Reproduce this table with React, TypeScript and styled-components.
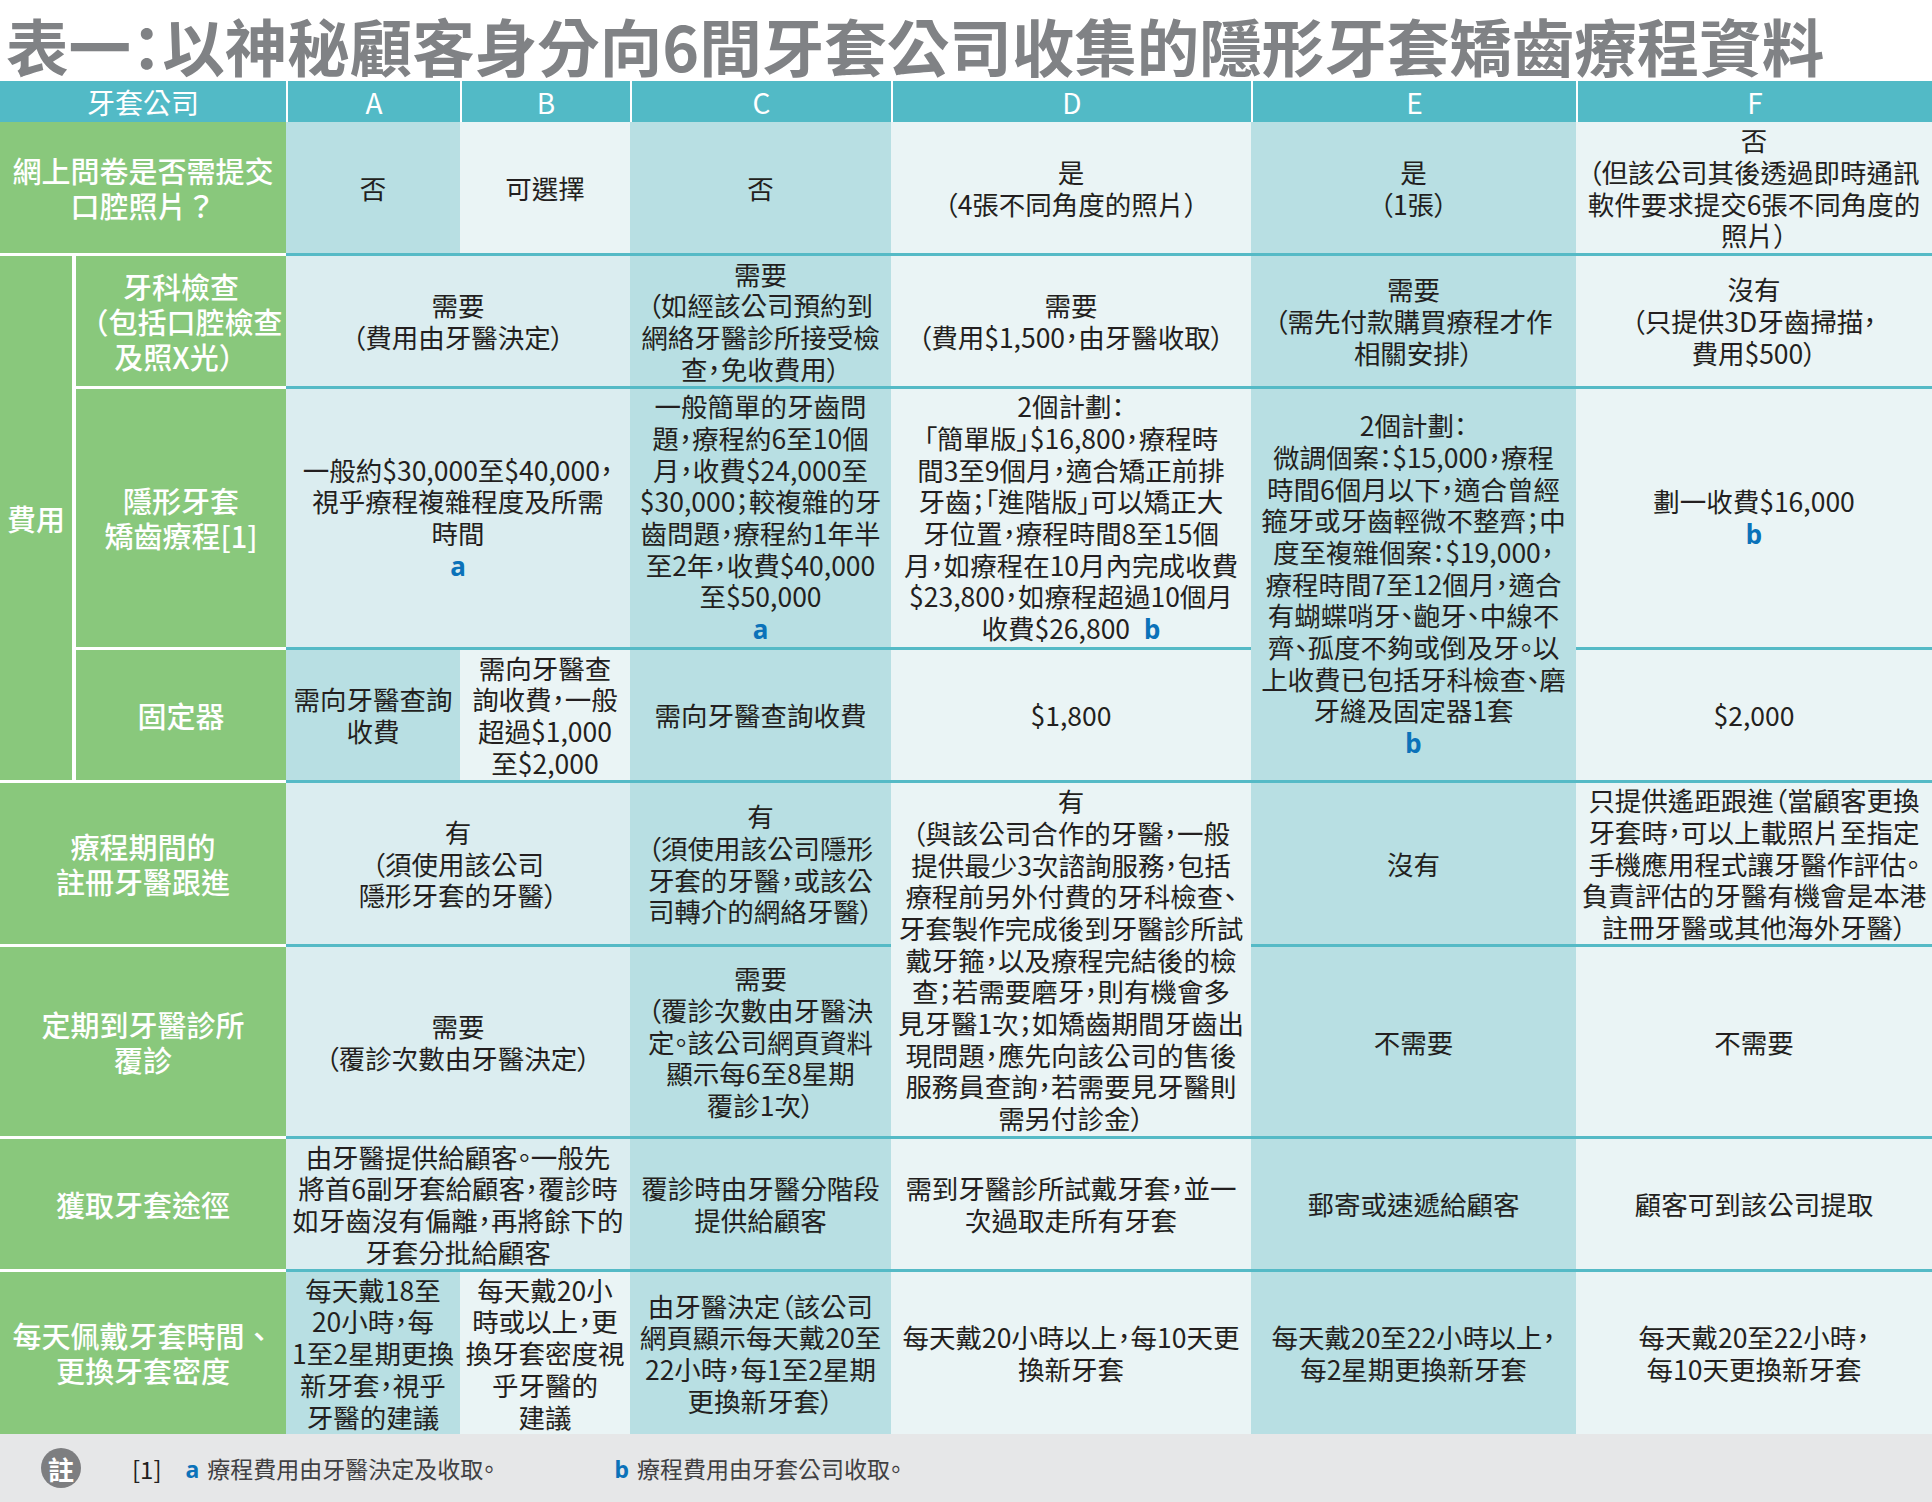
import React from 'react';
import styled, { createGlobalStyle } from 'styled-components';

const C = {
  green: '#89c87c',
  head: '#52bac6',
  dark: '#b8dfe3',
  light: '#eaf4f5',
  mid: '#dbedf0',
  line: '#55bac6',
  text: '#231f20',
  blue: '#0b72b9',
  title: '#808285',
  foot: '#e6e7e8',
};

type Tone = 'dark' | 'light' | 'mid';
const tones: Record<Tone, string> = { dark: C.dark, light: C.light, mid: C.mid };

const GlobalStyle = createGlobalStyle`
  html, body { margin: 0; padding: 0; background: #fff; }
  body {
    font-family: "Noto Sans CJK TC", "Noto Sans", sans-serif;
    color: ${C.text};
  }
`;

const Page = styled.div`
  width: 1932px;
  height: 1502px;
  display: flex;
  flex-direction: column;
  overflow: hidden;
`;

const Title = styled.h1`
  margin: 0;
  height: 81px;
  box-sizing: border-box;
  padding: 9px 0 0 6px;
  font-size: 62.5px;
  line-height: 72px;
  font-weight: 700;
  color: ${C.title};
  white-space: nowrap;
  font-feature-settings: "palt";
`;

const Grid = styled.div`
  display: grid;
  grid-template-columns: 72px 214px 174px 170px 261px 360px 325px 356px;
  grid-template-rows: 41px 131px 133px 261px 133px 164px 192px 133px 165px;
`;

type Place = { $c: string; $r: string };

const Head = styled.div<Place & { $first?: boolean }>`
  grid-column: ${p => p.$c};
  grid-row: ${p => p.$r};
  background: ${C.head};
  border-left: ${p => (p.$first ? 'none' : '2px solid #fff')};
  box-sizing: border-box;
  display: flex;
  align-items: center;
  justify-content: center;
  color: #fff;
  font-size: 28px;
  line-height: 1;
  white-space: nowrap;
`;

const Label = styled.div<Place & { $sep?: boolean; $sub?: boolean }>`
  grid-column: ${p => p.$c};
  grid-row: ${p => p.$r};
  background: ${C.green};
  border-top: ${p => (p.$sep ? '3px solid #fff' : 'none')};
  border-left: ${p => (p.$sub ? '4px solid #fff' : 'none')};
  box-sizing: border-box;
  display: flex;
  align-items: center;
  justify-content: center;
  text-align: center;
  white-space: nowrap;
  color: #fff;
  font-size: 29px;
  line-height: 35px;
  font-weight: 500;
`;

const Cell = styled.div<Place & { $tone: Tone; $sep?: boolean }>`
  grid-column: ${p => p.$c};
  grid-row: ${p => p.$r};
  background: ${p => tones[p.$tone]};
  border-top: ${p => (p.$sep ? `3px solid ${C.line}` : 'none')};
  box-sizing: border-box;
  display: flex;
  align-items: center;
  justify-content: center;
  text-align: center;
  white-space: nowrap;
  color: ${C.text};
  font-size: 26.5px;
  line-height: 31.7px;
  font-feature-settings: "palt";
`;

const Text = styled.div`
  display: block;
`;

const Mark = styled.span<{ $inline?: boolean }>`
  font-family: "Noto Sans", "Open Sans", sans-serif;
  font-weight: 700;
  color: ${C.blue};
  font-size: 26px;
  margin-left: ${p => (p.$inline ? '14px' : '0')};
`;

const Footer = styled.footer`
  flex: 1;
  background: ${C.foot};
  display: flex;
  align-items: center;
  padding-left: 41px;
`;

const Badge = styled.span`
  width: 40px;
  height: 40px;
  border-radius: 50%;
  background: #7d7e80;
  color: #fff;
  font-size: 26px;
  font-weight: 700;
  display: flex;
  align-items: center;
  justify-content: center;
`;

const NoteRef = styled.span`
  margin-left: 51px;
  font-size: 24px;
  color: ${C.text};
`;

const NoteItem = styled.span<{ $w?: number; $ml: number }>`
  margin-left: ${p => p.$ml}px;
  width: ${p => (p.$w ? `${p.$w}px` : 'auto')};
  display: inline-flex;
  align-items: baseline;
  gap: 8px;
  font-size: 23px;
  color: #414042;
  font-feature-settings: "palt";
`;

const NoteMark = styled.span`
  font-family: "Noto Sans", "Open Sans", sans-serif;
  font-weight: 700;
  color: ${C.blue};
  font-size: 23px;
`;

const L = ({ lines }: { lines: React.ReactNode[] }) => (
  <Text>
    {lines.map((l, i) => (
      <React.Fragment key={i}>
        {i > 0 && <br />}
        {l}
      </React.Fragment>
    ))}
  </Text>
);

const AB = '3 / 5';
const A = '3';
const B = '4';
const CC = '5';
const D = '6';
const E = '7';
const F = '8';

export default function App() {
  return (
    <>
      <GlobalStyle />
      <Page>
        <Title>表一：以神秘顧客身分向6間牙套公司收集的隱形牙套矯齒療程資料</Title>
        <Grid>
          {/* header */}
          <Head $c="1 / 3" $r="1" $first>牙套公司</Head>
          <Head $c={A} $r="1">A</Head>
          <Head $c={B} $r="1">B</Head>
          <Head $c={CC} $r="1">C</Head>
          <Head $c={D} $r="1">D</Head>
          <Head $c={E} $r="1">E</Head>
          <Head $c={F} $r="1">F</Head>

          {/* row 1 */}
          <Label $c="1 / 3" $r="2"><L lines={['網上問卷是否需提交', '口腔照片？']} /></Label>
          <Cell $c={A} $r="2" $tone="dark"><L lines={['否']} /></Cell>
          <Cell $c={B} $r="2" $tone="light"><L lines={['可選擇']} /></Cell>
          <Cell $c={CC} $r="2" $tone="dark"><L lines={['否']} /></Cell>
          <Cell $c={D} $r="2" $tone="light"><L lines={['是', '（4張不同角度的照片）']} /></Cell>
          <Cell $c={E} $r="2" $tone="dark"><L lines={['是', '（1張）']} /></Cell>
          <Cell $c={F} $r="2" $tone="light">
            <L lines={['否', '（但該公司其後透過即時通訊', '軟件要求提交6張不同角度的', '照片）']} />
          </Cell>

          {/* 費用 group */}
          <Label $c="1" $r="3 / 6" $sep><L lines={['費用']} /></Label>

          {/* row 2 */}
          <Label $c="2" $r="3" $sep $sub><L lines={['牙科檢查', '（包括口腔檢查', '及照X光）']} /></Label>
          <Cell $c={AB} $r="3" $tone="mid" $sep><L lines={['需要', '（費用由牙醫決定）']} /></Cell>
          <Cell $c={CC} $r="3" $tone="dark" $sep>
            <L lines={['需要', '（如經該公司預約到', '網絡牙醫診所接受檢', '查，免收費用）']} />
          </Cell>
          <Cell $c={D} $r="3" $tone="light" $sep><L lines={['需要', '（費用$1,500，由牙醫收取）']} /></Cell>
          <Cell $c={E} $r="3" $tone="dark" $sep>
            <L lines={['需要', '（需先付款購買療程才作', '相關安排）']} />
          </Cell>
          <Cell $c={F} $r="3" $tone="light" $sep>
            <L lines={['沒有', '（只提供3D牙齒掃描，', '費用$500）']} />
          </Cell>

          {/* row 3 */}
          <Label $c="2" $r="4" $sep $sub><L lines={['隱形牙套', '矯齒療程[1]']} /></Label>
          <Cell $c={AB} $r="4" $tone="mid" $sep>
            <L lines={['一般約$30,000至$40,000，', '視乎療程複雜程度及所需', '時間', <Mark>a</Mark>]} />
          </Cell>
          <Cell $c={CC} $r="4" $tone="dark" $sep>
            <L
              lines={[
                '一般簡單的牙齒問',
                '題，療程約6至10個',
                '月，收費$24,000至',
                '$30,000；較複雜的牙',
                '齒問題，療程約1年半',
                '至2年，收費$40,000',
                '至$50,000',
                <Mark>a</Mark>,
              ]}
            />
          </Cell>
          <Cell $c={D} $r="4" $tone="light" $sep>
            <L
              lines={[
                '2個計劃：',
                '「簡單版」$16,800，療程時',
                '間3至9個月，適合矯正前排',
                '牙齒；「進階版」可以矯正大',
                '牙位置，療程時間8至15個',
                '月，如療程在10月內完成收費',
                '$23,800，如療程超過10個月',
                <>收費$26,800<Mark $inline>b</Mark></>,
              ]}
            />
          </Cell>
          <Cell $c={E} $r="4 / 6" $tone="dark" $sep>
            <L
              lines={[
                '2個計劃：',
                '微調個案：$15,000，療程',
                '時間6個月以下，適合曾經',
                '箍牙或牙齒輕微不整齊；中',
                '度至複雜個案：$19,000，',
                '療程時間7至12個月，適合',
                '有蝴蝶哨牙、齙牙、中線不',
                '齊、孤度不夠或倒及牙。以',
                '上收費已包括牙科檢查、磨',
                '牙縫及固定器1套',
                <Mark>b</Mark>,
              ]}
            />
          </Cell>
          <Cell $c={F} $r="4" $tone="light" $sep>
            <L lines={['劃一收費$16,000', <Mark>b</Mark>]} />
          </Cell>

          {/* row 4 */}
          <Label $c="2" $r="5" $sep $sub><L lines={['固定器']} /></Label>
          <Cell $c={A} $r="5" $tone="dark" $sep><L lines={['需向牙醫查詢', '收費']} /></Cell>
          <Cell $c={B} $r="5" $tone="light" $sep>
            <L lines={['需向牙醫查', '詢收費，一般', '超過$1,000', '至$2,000']} />
          </Cell>
          <Cell $c={CC} $r="5" $tone="dark" $sep><L lines={['需向牙醫查詢收費']} /></Cell>
          <Cell $c={D} $r="5" $tone="light" $sep><L lines={['$1,800']} /></Cell>
          <Cell $c={F} $r="5" $tone="light" $sep><L lines={['$2,000']} /></Cell>

          {/* row 5 */}
          <Label $c="1 / 3" $r="6" $sep><L lines={['療程期間的', '註冊牙醫跟進']} /></Label>
          <Cell $c={AB} $r="6" $tone="mid" $sep>
            <L lines={['有', '（須使用該公司', '隱形牙套的牙醫）']} />
          </Cell>
          <Cell $c={CC} $r="6" $tone="dark" $sep>
            <L lines={['有', '（須使用該公司隱形', '牙套的牙醫，或該公', '司轉介的網絡牙醫）']} />
          </Cell>
          <Cell $c={D} $r="6 / 8" $tone="light" $sep>
            <L
              lines={[
                '有',
                '（與該公司合作的牙醫，一般',
                '提供最少3次諮詢服務，包括',
                '療程前另外付費的牙科檢查、',
                '牙套製作完成後到牙醫診所試',
                '戴牙箍，以及療程完結後的檢',
                '查；若需要磨牙，則有機會多',
                '見牙醫1次；如矯齒期間牙齒出',
                '現問題，應先向該公司的售後',
                '服務員查詢，若需要見牙醫則',
                '需另付診金）',
              ]}
            />
          </Cell>
          <Cell $c={E} $r="6" $tone="dark" $sep><L lines={['沒有']} /></Cell>
          <Cell $c={F} $r="6" $tone="light" $sep>
            <L
              lines={[
                '只提供遙距跟進（當顧客更換',
                '牙套時，可以上載照片至指定',
                '手機應用程式讓牙醫作評估。',
                '負責評估的牙醫有機會是本港',
                '註冊牙醫或其他海外牙醫）',
              ]}
            />
          </Cell>

          {/* row 6 */}
          <Label $c="1 / 3" $r="7" $sep><L lines={['定期到牙醫診所', '覆診']} /></Label>
          <Cell $c={AB} $r="7" $tone="mid" $sep><L lines={['需要', '（覆診次數由牙醫決定）']} /></Cell>
          <Cell $c={CC} $r="7" $tone="dark" $sep>
            <L lines={['需要', '（覆診次數由牙醫決', '定。該公司網頁資料', '顯示每6至8星期', '覆診1次）']} />
          </Cell>
          <Cell $c={E} $r="7" $tone="dark" $sep><L lines={['不需要']} /></Cell>
          <Cell $c={F} $r="7" $tone="light" $sep><L lines={['不需要']} /></Cell>

          {/* row 7 */}
          <Label $c="1 / 3" $r="8" $sep><L lines={['獲取牙套途徑']} /></Label>
          <Cell $c={AB} $r="8" $tone="mid" $sep>
            <L
              lines={[
                '由牙醫提供給顧客。一般先',
                '將首6副牙套給顧客，覆診時',
                '如牙齒沒有偏離，再將餘下的',
                '牙套分批給顧客',
              ]}
            />
          </Cell>
          <Cell $c={CC} $r="8" $tone="dark" $sep><L lines={['覆診時由牙醫分階段', '提供給顧客']} /></Cell>
          <Cell $c={D} $r="8" $tone="light" $sep><L lines={['需到牙醫診所試戴牙套，並一', '次過取走所有牙套']} /></Cell>
          <Cell $c={E} $r="8" $tone="dark" $sep><L lines={['郵寄或速遞給顧客']} /></Cell>
          <Cell $c={F} $r="8" $tone="light" $sep><L lines={['顧客可到該公司提取']} /></Cell>

          {/* row 8 */}
          <Label $c="1 / 3" $r="9" $sep><L lines={['每天佩戴牙套時間、', '更換牙套密度']} /></Label>
          <Cell $c={A} $r="9" $tone="dark" $sep>
            <L lines={['每天戴18至', '20小時，每', '1至2星期更換', '新牙套，視乎', '牙醫的建議']} />
          </Cell>
          <Cell $c={B} $r="9" $tone="light" $sep>
            <L lines={['每天戴20小', '時或以上，更', '換牙套密度視', '乎牙醫的', '建議']} />
          </Cell>
          <Cell $c={CC} $r="9" $tone="dark" $sep>
            <L lines={['由牙醫決定（該公司', '網頁顯示每天戴20至', '22小時，每1至2星期', '更換新牙套）']} />
          </Cell>
          <Cell $c={D} $r="9" $tone="light" $sep><L lines={['每天戴20小時以上，每10天更', '換新牙套']} /></Cell>
          <Cell $c={E} $r="9" $tone="dark" $sep><L lines={['每天戴20至22小時以上，', '每2星期更換新牙套']} /></Cell>
          <Cell $c={F} $r="9" $tone="light" $sep><L lines={['每天戴20至22小時，', '每10天更換新牙套']} /></Cell>
        </Grid>
        <Footer>
          <Badge>註</Badge>
          <NoteRef>[1]</NoteRef>
          <NoteItem $ml={24} $w={429}>
            <NoteMark>a</NoteMark>療程費用由牙醫決定及收取。
          </NoteItem>
          <NoteItem $ml={0}>
            <NoteMark>b</NoteMark>療程費用由牙套公司收取。
          </NoteItem>
        </Footer>
      </Page>
    </>
  );
}
